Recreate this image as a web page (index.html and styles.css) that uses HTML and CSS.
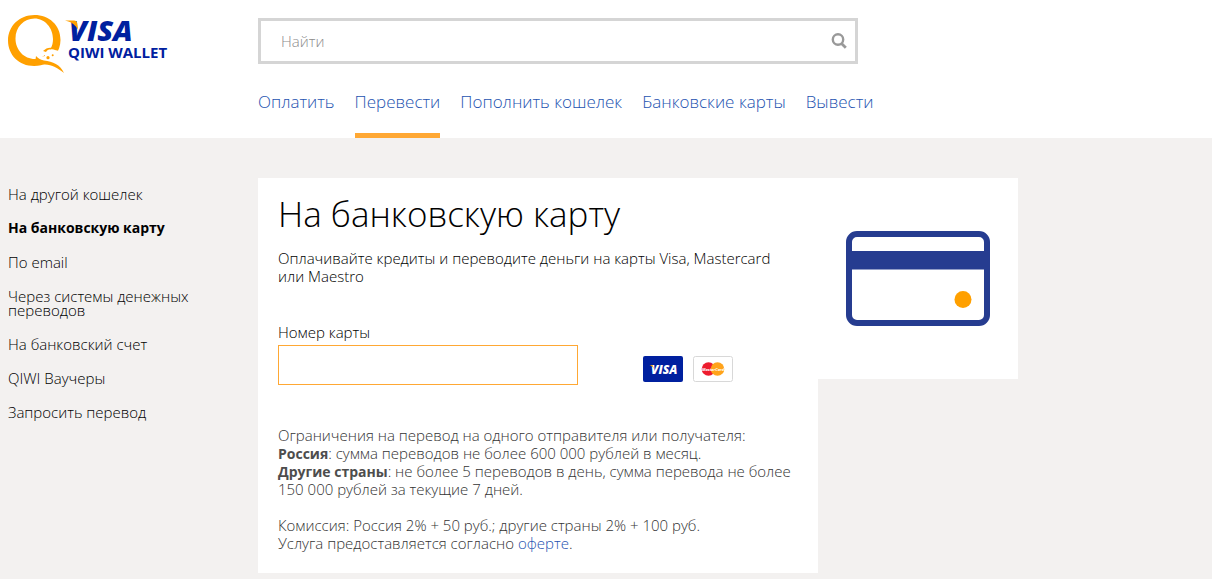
FILE: index.html
```html
<!DOCTYPE html>
<html lang="ru">
<head>
<meta charset="utf-8">
<meta name="viewport" content="width=device-width, initial-scale=1">
<title>Visa QIWI Wallet</title>
<link rel="stylesheet" href="styles.css">
</head>
<body>
<header class="header">
  <a class="logo" href="#" aria-label="Visa QIWI Wallet">
    <svg width="168" height="64" viewBox="0 0 168 64">
      <path fill="#ffa000" fill-rule="evenodd" d="M26.500 5C11.500 5 0 16 0 30.500S11 56 26 56c5 0 9-1 13-3 5-3 13.500-11 13.500-23C52.500 15 41 5 26.500 5Zm0 3.500C37 8.500 45 18 45 29c0 7-3 12-7 15-3 3-7 5-11 5C16 49 7.500 40 7.500 28.500S16 8.500 26.500 8.500Z"/>
      <path fill="#fff" d="m28 45 4 2 5-1c-1-3 0-4 2-5 3-2 6-2 8-1l4 1 2 4-4 3 1 6-10-1-7-1-4-2Z"/>
      <path fill="#ffa000" d="M35 41c3-3 6-4 10-3l1 1c-4 0-6 0-8 3Z"/>
      <path fill="#ffa000" d="M28 46c2 2 4 4 8 4.500 9 1 16 4 20 12.500-6-5-12-8-19-8.500l-10-1Z"/>
      <circle cx="40" cy="47.700" r="1.600" fill="#ffa000"/>
      <circle cx="44.700" cy="45.300" r="1" fill="#ffa000"/>
      <text class="logo-visa" x="61" y="31">VISA</text>
      <path fill="#ffa000" d="M57 10.500h9c2 0 3 1 3.300 3l.9 6.500c-2-4-6-8-13.200-9.500Z"/>
      <text class="logo-wallet" x="60" y="48">QIWI WALLET</text>
    </svg>
  </a>
  <div class="header-main">
    <form class="search">
      <input class="search-input" type="search" aria-label="Найти" placeholder="Найти">
      <button class="search-button" type="button" aria-label="Искать">
        <svg width="16" height="16" viewBox="0 0 16 16" fill="none" stroke="#999">
          <circle cx="7" cy="6.500" r="5.200" stroke-width="2.400"/>
          <path d="m10.500 10.500 4.300 4.300" stroke-width="2.800"/>
        </svg>
      </button>
    </form>
    <nav class="nav">
      <a class="nav-link" href="#">Оплатить</a>
      <a class="nav-link nav-link-active" href="#" aria-current="page">Перевести</a>
      <a class="nav-link" href="#">Пополнить кошелек</a>
      <a class="nav-link" href="#">Банковские карты</a>
      <a class="nav-link" href="#">Вывести</a>
    </nav>
  </div>
</header>
<div class="page">
  <nav class="side">
    <a class="side-link" href="#">На другой кошелек</a>
    <a class="side-link side-link-active" href="#" aria-current="page">На банковскую карту</a>
    <a class="side-link" href="#">По email</a>
    <a class="side-link" href="#">Через системы денежных переводов</a>
    <a class="side-link" href="#">На банковский счет</a>
    <a class="side-link" href="#">QIWI Ваучеры</a>
    <a class="side-link" href="#">Запросить перевод</a>
  </nav>
  <main class="panel">
    <h1 class="title">На банковскую карту</h1>
    <p class="lead">Оплачивайте кредиты и переводите деньги на карты Visa, Mastercard или&nbsp;Maestro</p>
    <form class="form">
      <div class="field">
        <label class="label" for="card">Номер карты</label>
        <input class="card-input" id="card" type="text" inputmode="numeric">
      </div>
      <div class="brands">
        <svg width="40" height="26" viewBox="0 0 40 26" role="img" aria-label="Visa">
          <rect width="40" height="26" rx="2" fill="#00209f"/>
          <text class="brand-visa" x="8" y="18">VISA</text>
          <path fill="#ffa000" d="M6.500 9h3l1.500 4c-1-2-2-3-4.500-4Z"/>
        </svg>
        <svg width="40" height="26" viewBox="0 0 40 26" role="img" aria-label="MasterCard">
          <rect x=".5" y=".5" width="39" height="25" rx="2" fill="#fff" stroke="#d8d8d8"/>
          <circle cx="15.500" cy="13" r="6.800" fill="#ed1c2e"/>
          <circle cx="24.500" cy="13" r="6.800" fill="#ffa31a"/>
          <text class="brand-mc" x="20" y="15" text-anchor="middle">MasterCard</text>
        </svg>
      </div>
    </form>
    <div class="terms">
      <p class="terms-text">Ограничения на перевод на одного отправителя или получателя:<br>
      <strong>Россия</strong>: сумма переводов не более 600 000 рублей в месяц.<br>
      <strong>Другие страны</strong>: не более 5 переводов в день, сумма перевода не более 150&nbsp;000 рублей за текущие 7 дней.</p>
      <p class="terms-text">Комиссия: Россия 2% + 50 руб.; другие страны 2% + 100 руб.<br>
      Услуга предоставляется согласно <a class="link" href="#">оферте</a>.</p>
    </div>
  </main>
  <aside class="picture">
    <svg width="144" height="95" viewBox="0 0 144 95" aria-hidden="true">
      <rect x="3" y="3" width="138" height="89" rx="8" fill="#fff" stroke="#263c90" stroke-width="6"/>
      <path fill="#263c90" d="M3 20h138v18.500H3z"/>
      <circle cx="117" cy="68.500" r="8.500" fill="#ffa000"/>
    </svg>
  </aside>
</div>
</body>
</html>
```
FILE: styles.css
```css
* { box-sizing: border-box; }

body {
  margin: 0;
  min-height: 100vh;
  background: #f3f1f0;
  color: #000;
  font: 300 15px/18px "Open Sans", "Noto Sans", sans-serif;
}

h1, p { margin: 0; font-weight: 300; }
a { text-decoration: none; }
svg { display: block; }

.header {
  display: grid;
  grid-template-columns: 250px minmax(0, 1fr);
  padding: 0 8px;
  background: #fff;
}
.logo { padding-top: 10px; }
.logo-visa { font: italic 800 29px "Open Sans", sans-serif; fill: #00209f; }
.logo-wallet { font: 700 15px "Open Sans", sans-serif; fill: #00209f; }

.header-main { padding-top: 18px; }
.search {
  display: flex;
  max-width: 600px;
  height: 46px;
  border: 3px solid #d5d5d5;
}
.search-input {
  flex: 1;
  min-width: 0;
  padding: 0 20px;
  border: 0;
  outline: 0;
  background: none;
  font: inherit;
}
.search-input::placeholder { color: #8c8c8c; opacity: 1; }
.search-button {
  padding: 0 8px;
  border: 0;
  background: none;
  cursor: pointer;
}

.nav { display: flex; flex-wrap: wrap; gap: 0 20px; padding-top: 24px; }
.nav-link {
  padding: 2px 0 19px;
  border-bottom: 5px solid transparent;
  color: #2453b0;
  font-size: 17px;
  line-height: 24px;
}
.nav-link-active { border-color: #ffa834; }

.page {
  display: flex;
  align-items: flex-start;
  padding: 40px 8px 6px;
}
.side {
  display: flex;
  flex-direction: column;
  flex: 0 0 250px;
  gap: 20px;
  padding: 9px 50px 0 0;
  line-height: 14px;
}
.side-link { color: #000; }
.side-link-active { font-size: 14px; font-weight: 700; }

.panel {
  flex: 0 1 560px;
  padding: 16px 20px 21px;
  background: #fff;
}
.title { font-size: 35px; line-height: 40px; }
.lead { padding-top: 15px; }

.form { display: flex; align-items: flex-end; gap: 65px; padding-top: 38px; }
.field { flex: 0 1 300px; }
.label { display: block; }
.card-input {
  display: block;
  width: 100%;
  height: 40px;
  margin-top: 4px;
  padding: 0 10px;
  border: 1px solid #ffa834;
  outline: 0;
  font: inherit;
}
.brands { display: flex; gap: 10px; padding-bottom: 3px; }
.brand-visa { font: italic 800 12px "Open Sans", sans-serif; fill: #fff; }
.brand-mc { font: italic 700 4px "Open Sans", sans-serif; fill: #fff; }

.terms { display: grid; gap: 18px; padding-top: 41px; color: #333; }
.terms-text strong { color: #4d4d4d; font-size: 14px; font-weight: 700; line-height: 14px; }
.link { color: #2453b0; }

.picture {
  flex: 0 0 200px;
  padding: 53px 28px;
  background: #fff;
}
```
